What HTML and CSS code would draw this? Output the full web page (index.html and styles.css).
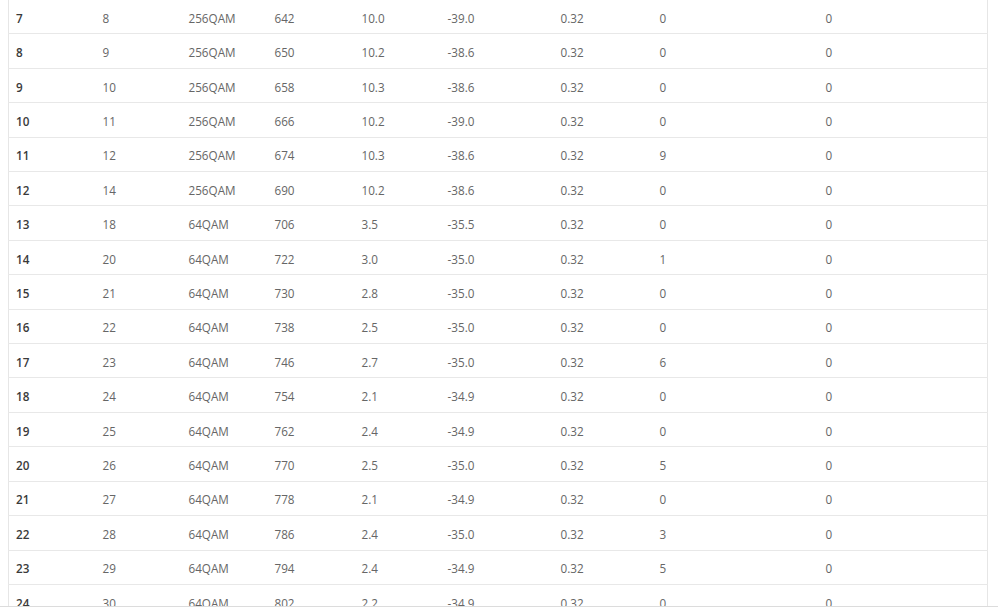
FILE: index.html
```html
<!DOCTYPE html>
<html>
<head>
<meta charset="utf-8">
<link rel="stylesheet" href="styles.css">
</head>
<body>
<div class="scroller">
<table class="channels">
<colgroup>
<col class="c1"><col class="c2"><col class="c3"><col class="c4"><col class="c5"><col class="c6"><col class="c7"><col class="c8"><col class="c9">
</colgroup>
<tbody>
<tr><th>7</th><td>8</td><td>256QAM</td><td>642</td><td>10.0</td><td>-39.0</td><td>0.32</td><td>0</td><td>0</td></tr>
<tr><th>8</th><td>9</td><td>256QAM</td><td>650</td><td>10.2</td><td>-38.6</td><td>0.32</td><td>0</td><td>0</td></tr>
<tr><th>9</th><td>10</td><td>256QAM</td><td>658</td><td>10.3</td><td>-38.6</td><td>0.32</td><td>0</td><td>0</td></tr>
<tr><th>10</th><td>11</td><td>256QAM</td><td>666</td><td>10.2</td><td>-39.0</td><td>0.32</td><td>0</td><td>0</td></tr>
<tr><th>11</th><td>12</td><td>256QAM</td><td>674</td><td>10.3</td><td>-38.6</td><td>0.32</td><td>9</td><td>0</td></tr>
<tr><th>12</th><td>14</td><td>256QAM</td><td>690</td><td>10.2</td><td>-38.6</td><td>0.32</td><td>0</td><td>0</td></tr>
<tr><th>13</th><td>18</td><td>64QAM</td><td>706</td><td>3.5</td><td>-35.5</td><td>0.32</td><td>0</td><td>0</td></tr>
<tr><th>14</th><td>20</td><td>64QAM</td><td>722</td><td>3.0</td><td>-35.0</td><td>0.32</td><td>1</td><td>0</td></tr>
<tr><th>15</th><td>21</td><td>64QAM</td><td>730</td><td>2.8</td><td>-35.0</td><td>0.32</td><td>0</td><td>0</td></tr>
<tr><th>16</th><td>22</td><td>64QAM</td><td>738</td><td>2.5</td><td>-35.0</td><td>0.32</td><td>0</td><td>0</td></tr>
<tr><th>17</th><td>23</td><td>64QAM</td><td>746</td><td>2.7</td><td>-35.0</td><td>0.32</td><td>6</td><td>0</td></tr>
<tr><th>18</th><td>24</td><td>64QAM</td><td>754</td><td>2.1</td><td>-34.9</td><td>0.32</td><td>0</td><td>0</td></tr>
<tr><th>19</th><td>25</td><td>64QAM</td><td>762</td><td>2.4</td><td>-34.9</td><td>0.32</td><td>0</td><td>0</td></tr>
<tr><th>20</th><td>26</td><td>64QAM</td><td>770</td><td>2.5</td><td>-35.0</td><td>0.32</td><td>5</td><td>0</td></tr>
<tr><th>21</th><td>27</td><td>64QAM</td><td>778</td><td>2.1</td><td>-34.9</td><td>0.32</td><td>0</td><td>0</td></tr>
<tr><th>22</th><td>28</td><td>64QAM</td><td>786</td><td>2.4</td><td>-35.0</td><td>0.32</td><td>3</td><td>0</td></tr>
<tr><th>23</th><td>29</td><td>64QAM</td><td>794</td><td>2.4</td><td>-34.9</td><td>0.32</td><td>5</td><td>0</td></tr>
<tr><th>24</th><td>30</td><td>64QAM</td><td>802</td><td>2.2</td><td>-34.9</td><td>0.32</td><td>0</td><td>0</td></tr>
<tr><th>25</th><td>31</td><td>64QAM</td><td>810</td><td>2.3</td><td>-34.9</td><td>0.32</td><td>0</td><td>0</td></tr>
</tbody>
</table>
</div>
<div class="footer-bar"></div>
</body>
</html>
```
FILE: styles.css
```css
html, body {
  margin: 0;
  padding: 0;
  background: #ffffff;
  overflow: hidden;
}
body {
  font-family: "Open Sans", "Noto Sans", sans-serif;
  font-size: 11.7px;
  color: #666666;
}
.scroller {
  height: 614px;
  overflow: hidden;
  padding-left: 8px;
}
.channels {
  width: 979px;
  margin-top: -1px;
  border-collapse: collapse;
  table-layout: fixed;
  border-left: 1px solid #e6e6e6;
  border-right: 1px solid #e6e6e6;
}
.c1 { width: 86px; }
.c2 { width: 86px; }
.c3 { width: 86px; }
.c4 { width: 87px; }
.c5 { width: 86px; }
.c6 { width: 113px; }
.c7 { width: 99px; }
.c8 { width: 166px; }
.c9 { width: 170px; }
.channels tr {
  height: 34.41px;
  border-top: 1px solid #e8e8e8;
}
.channels th,
.channels td {
  padding: 2px 0 0 8px;
  text-align: left;
  vertical-align: middle;
  line-height: 16px;
  white-space: nowrap;
}
.channels th {
  font-weight: 600;
  color: #3a3a3a;
  padding-left: 7px;
}
.footer-bar {
  position: fixed;
  left: 0;
  right: 0;
  bottom: 0;
  height: 7px;
  background: #ffffff;
  border-top: 1px solid #dcdcdc;
}
```
